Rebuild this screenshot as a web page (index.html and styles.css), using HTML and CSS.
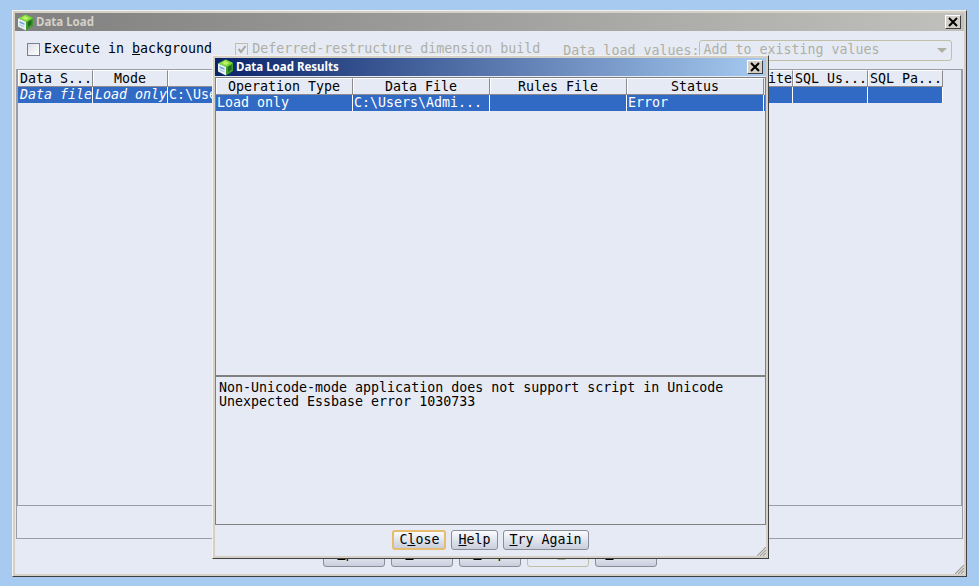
FILE: index.html
```html
<!DOCTYPE html>
<html lang="en">
<head>
    <meta charset="UTF-8">
    <title>Data Load</title>
    <link rel="stylesheet" href="styles.css">
</head>
<body>
    <svg width="0" height="0" class="defs">
        <symbol id="cube" viewBox="0 0 17 17">
            <path d="M9 0.5 L16 4 L16 12 L9 16.5 Z" fill="#3f9c2c"/>
            <path d="M8.5 0.5 L16 4 L9 8 L1 4.5 Z" fill="#7fdc3c"/>
            <path d="M8 2 L12 4 L9 6 L5 4 Z" fill="#c4f06a"/>
            <path d="M1 4.5 L9 8 L9 16.5 L1 12.5 Z" fill="#eef3f6"/>
            <path d="M2.5 7 L7.5 9.2 L7.5 11 L2.5 9 Z" fill="#6fa8d8"/>
            <path d="M2.5 10 L7.5 12.2 L7.5 13.5 L2.5 11.4 Z" fill="#a8c8e0"/>
            <path d="M11 8 L14.5 6 L14.5 10.5 L11 13 Z" fill="#1f6b1c"/>
        </symbol>
        <symbol id="grip" viewBox="0 0 9 9">
            <path d="M0 9 L9 0 M3 9 L9 3 M6 9 L9 6" stroke="#a09c8c" stroke-width="1.2" fill="none"/>
        </symbol>
    </svg>

    <!-- main window -->
    <div class="window main-window">
        <div class="titlebar titlebar-off">
            <svg class="app-icon"><use href="#cube"/></svg>
            <span class="title-text">Data Load</span>
            <span class="close-btn">
                <svg width="10" height="10" viewBox="0 0 10 10"><path d="M1 1 L9 9 M9 1 L1 9" stroke="#000" stroke-width="2"/></svg>
            </span>
        </div>

        <div class="options">
            <span class="check"></span>
            <span class="opt-label">Execute in <u>b</u>ackground</span>
            <span class="check check-off">
                <svg width="10" height="10" viewBox="0 0 10 10"><path d="M1.5 5 L4 8 L8.5 2" stroke="#a8a898" stroke-width="2" fill="none"/></svg>
            </span>
            <span class="opt-label off">Deferred-restructure dimension build</span>
            <span class="opt-label off values-label">Data load values:</span>
            <span class="select-off">
                <span>Add to existing values</span>
                <span class="arrow"></span>
            </span>
        </div>

        <div class="table-frame">
            <div class="grid main-head">
                <span class="cell head">Data S...</span>
                <span class="cell head">Mode</span>
                <span class="cell head">Data File</span>
                <span class="cell head cell-end">Overwrite</span>
                <span class="cell head">SQL Us...</span>
                <span class="cell head">SQL Pa...</span>
            </div>
            <div class="grid main-head row-sel">
                <span class="cell cell-italic">Data file</span>
                <span class="cell cell-italic">Load only</span>
                <span class="cell cell-tight">C:\Users\Administrator</span>
                <span class="cell"></span>
                <span class="cell"></span>
                <span class="cell"></span>
            </div>
        </div>
        <div class="status-panel"></div>

        <div class="button-row main-buttons">
            <span class="btn btn-main"><u>O</u>pen</span>
            <span class="btn btn-main"><u>S</u>ave</span>
            <span class="btn btn-main"><u>S</u>top</span>
            <span class="btn btn-main btn-off">Ed<u>i</u>t</span>
            <span class="btn btn-main"><u>R</u>eset</span>
        </div>
        <svg class="grip"><use href="#grip"/></svg>
    </div>

    <!-- results dialog -->
    <div class="window dialog">
        <div class="titlebar titlebar-on">
            <svg class="app-icon"><use href="#cube"/></svg>
            <span class="title-text">Data Load Results</span>
            <span class="close-btn">
                <svg width="10" height="10" viewBox="0 0 10 10"><path d="M1 1 L9 9 M9 1 L1 9" stroke="#000" stroke-width="2"/></svg>
            </span>
        </div>

        <div class="results-pane">
            <div class="grid dlg-grid">
                <span class="cell head">Operation Type</span>
                <span class="cell head">Data File</span>
                <span class="cell head">Rules File</span>
                <span class="cell head">Status</span>
            </div>
            <div class="grid dlg-grid row-sel">
                <span class="cell cell-tight">Load only</span>
                <span class="cell cell-tight">C:\Users\Admi...</span>
                <span class="cell cell-tight"></span>
                <span class="cell cell-tight">Error</span>
            </div>
        </div>

        <div class="message-pane">
            <div>Non-Unicode-mode application does not support script in Unicode</div>
            <div>Unexpected Essbase error 1030733</div>
        </div>

        <div class="button-row dlg-buttons">
            <span class="btn btn-default">C<u>l</u>ose</span>
            <span class="btn"><u>H</u>elp</span>
            <span class="btn"><u>T</u>ry Again</span>
        </div>
        <svg class="grip"><use href="#grip"/></svg>
    </div>
</body>
</html>
```

FILE: styles.css
```css
* {
    box-sizing: border-box;
}
html, body {
    height: 100%;
}
body {
    margin: 0;
    background-color: #a6caf0;
    font-family: "DejaVu Sans Mono", monospace;
    font-size: 13.3px;
    line-height: 14px;
    color: #000;
    overflow: hidden;
    position: relative;
}
.defs {
    position: absolute;
}
.window {
    position: absolute;
    display: flex;
    flex-direction: column;
    background-color: #e6eaf5;
    border: 1px solid;
    border-color: #f4f2ec #404040 #404040 #f4f2ec;
    box-shadow: inset 0 0 0 2px #d4d0c8;
    padding: 2px;
}
.main-window {
    left: 12px;
    top: 10px;
    width: 955px;
    height: 567px;
}
.dialog {
    left: 212px;
    top: 55px;
    width: 557px;
    height: 504px;
}
.titlebar {
    display: flex;
    align-items: center;
    height: 18px;
    flex: none;
    padding: 0 3px 0 2px;
    font-family: "Noto Sans", sans-serif;
    font-size: 11.5px;
    font-weight: bold;
}
.titlebar-off {
    background: linear-gradient(90deg, #808080, #c0c0bc);
    color: #d4d0c8;
}
.titlebar-on {
    background: linear-gradient(90deg, #0a246a, #a6caf0);
    color: #fff;
}
.app-icon {
    width: 17px;
    height: 17px;
    margin-right: 2px;
    flex: none;
}
.title-text {
    flex: 1;
}
.close-btn {
    display: flex;
    align-items: center;
    justify-content: center;
    width: 16px;
    height: 14px;
    background-color: #d4d0c8;
    border: 1px solid;
    border-color: #fff #404040 #404040 #fff;
}

/* top options row */
.options {
    display: flex;
    align-items: center;
    height: 38px;
    flex: none;
    padding-left: 12px;
}
.check {
    width: 13px;
    height: 13px;
    margin-right: 4px;
    margin-bottom: 2px;
    border: 1px solid #7b8090;
    background: linear-gradient(135deg, #dcdfe8, #fff);
    display: flex;
    align-items: center;
    justify-content: center;
}
.check-off {
    margin-left: 23px;
    border-color: #c0c0a8;
    background: #e6eaf5;
}
.opt-label {
    white-space: pre;
    margin-bottom: 2px;
}
.off {
    color: #aeb0a4;
}
.values-label {
    margin-left: 23px;
    margin-bottom: -2px;
}
.select-off {
    display: flex;
    align-items: center;
    justify-content: space-between;
    width: 253px;
    height: 21px;
    padding: 0 3px;
    border: 1px solid #c0c0a8;
    border-radius: 3px;
    color: #aeb0a4;
}
.arrow {
    width: 0;
    height: 0;
    margin-right: 1px;
    border-left: 5px solid transparent;
    border-right: 5px solid transparent;
    border-top: 5px solid #aeb0a4;
}

/* tables */
.table-frame {
    height: 437px;
    flex: none;
    margin: 0 1px;
    border: 1px solid #9a9eac;
    border-width: 1px 2px 1px 2px;
}
.grid {
    display: grid;
    height: 17px;
}
.main-head {
    grid-template-columns: 75px 75px 575px 50px 75px 75px;
    width: 925px;
}
.dlg-grid {
    grid-template-columns: 137px 137px 137px 137px;
}
.cell {
    padding: 0 2px;
    white-space: nowrap;
    overflow: hidden;
    border-right: 1px solid #fff;
    line-height: 16px;
}
.cell-italic {
    font-style: italic;
}
.cell-tight {
    padding: 0 1px;
}
.head {
    text-align: center;
    border-right: 1px solid #8a8a90;
    border-bottom: 1px solid #8a8a90;
    border-top: 1px solid #fff;
    box-shadow: inset 1px 0 0 #fff;
    background-color: #e6eaf5;
}
.cell-end {
    display: flex;
    justify-content: flex-end;
    padding: 0;
}
.row-sel {
    background-color: #316ac5;
    color: #fff;
    height: 16px;
}
.status-panel {
    height: 33px;
    flex: none;
    margin: 0 1px;
    border: 1px solid #9a9eac;
    border-top: none;
}
.button-row {
    display: flex;
    justify-content: center;
}
.main-buttons {
    gap: 6px;
    padding-top: 9px;
}
.dlg-buttons {
    gap: 5px;
    padding-top: 5px;
}
.btn {
    display: flex;
    align-items: center;
    justify-content: center;
    white-space: pre;
    height: 20px;
    padding: 0 6px;
    border: 1px solid #8a8e98;
    border-radius: 3px;
    background: linear-gradient(#fafbfd, #c8cedd);
}
.btn-main {
    width: 62px;
    height: 19px;
    padding-bottom: 7px;
}
.btn-off {
    border-color: #c0c0a8;
    background: #e6eaf5;
    color: #aeb0a4;
}
.btn-default {
    border: 2px solid #e8bc70;
    padding: 0 5px;
}

/* dialog panes */
.results-pane {
    height: 300px;
    flex: none;
    border: 1px solid #808080;
    border-width: 1px 1px 2px 1px;
    margin-top: 1px;
}
.message-pane {
    height: 148px;
    flex: none;
    padding: 4px 3px;
    border: 1px solid #808080;
    border-top: none;
}
.grip {
    position: absolute;
    right: 2px;
    bottom: 2px;
    width: 9px;
    height: 9px;
}
```
